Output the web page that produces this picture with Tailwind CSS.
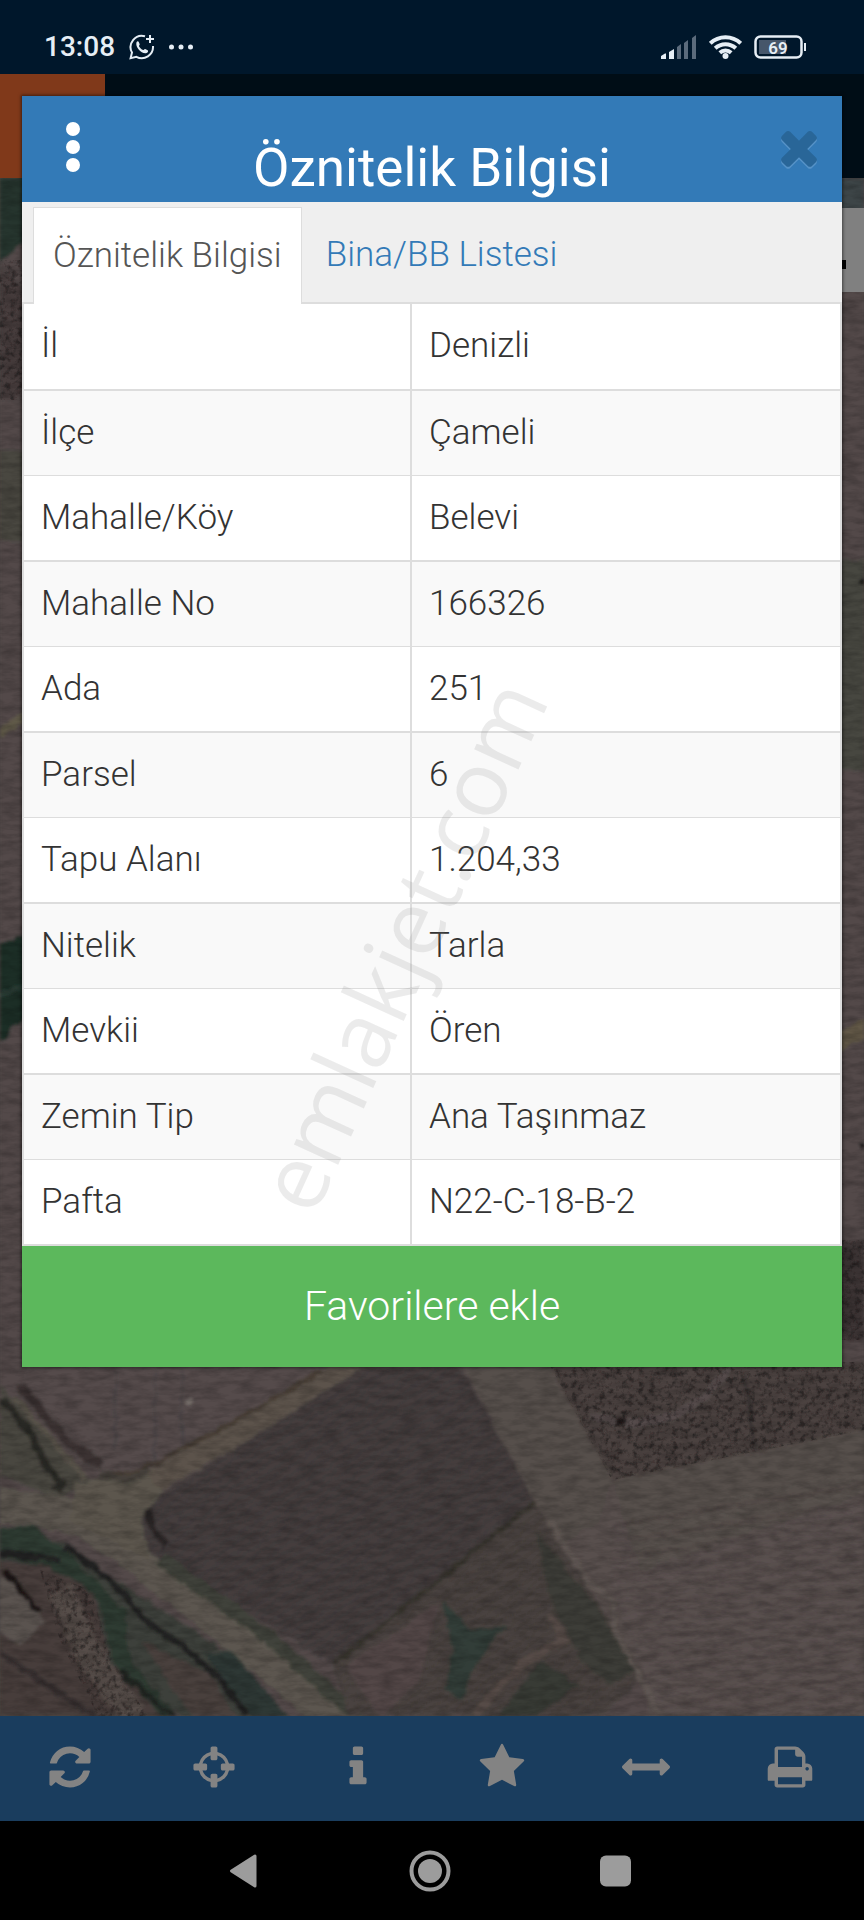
<!DOCTYPE html>
<html lang="tr">
<head>
  <meta charset="UTF-8">
  <meta name="viewport" content="width=device-width, initial-scale=1.0">
  <title>Öznitelik Bilgisi</title>
  <script src="https://cdn.jsdelivr.net/npm/@tailwindcss/browser@4"></script>
</head>
<body class="font-['Roboto','Noto_Sans',sans-serif] bg-black">
  <div class="relative flex min-h-screen flex-col overflow-hidden">

    <!-- status bar -->
    <div class="flex h-[74px] items-center justify-between bg-[#00172b] pt-5 pr-[58px] pl-11 text-[#e6eef5]">
      <div class="flex items-center gap-[14px]">
        <span class="text-[28px] leading-8 font-medium">13:08</span>
        <svg class="size-[26px]" viewBox="0 0 26 26" fill="none" stroke="currentColor" stroke-width="2">
          <path d="M16 2.2A11.3 11.3 0 0 0 3 18.5L1.6 24.2l5.8-1.4A11.3 11.3 0 0 0 24 12"/>
          <path d="M21 1v8M17 5h8"/>
          <path d="M7.5 8.2c.8-1.3 2-1 2.4 0l.8 2c.2.8-.9 1.5-.7 2 1 2 2.300 3 4.200 3.900.6.2 1.300-1.300 2-1l2.400 1.200c1 .6.4 2.200-1 2.700-4.600 1.400-11.700-5.500-10.100-10.800z" fill="currentColor" stroke="none"/>
        </svg>
        <svg class="h-2 w-6" viewBox="0 0 24 8" fill="currentColor"><circle cx="2.500" cy="4" r="2.500"/><circle cx="12" cy="4" r="2.500"/><circle cx="21.500" cy="4" r="2.500"/></svg>
      </div>
      <div class="flex items-center gap-3">
        <svg class="h-6 w-9" viewBox="0 0 36 24" fill="currentColor">
          <path d="M0 24v-3l4-2.500h1V24zM8 24v-7l5-3v10z"/>
          <path d="M16 24V12l4-3v15zM23 24V8l4-3v19zM31 24V3l4-3v24z" fill="#5b6b7c"/>
        </svg>
        <svg class="h-6 w-[33px]" viewBox="0 0 33 24" fill="none" stroke="currentColor" stroke-width="4">
          <path d="M1.300 8.300a22 22 0 0 1 30.400 0"/><path d="M6.200 13.300a15 15 0 0 1 20.600 0"/><path d="M10.800 17.800a8.500 8.500 0 0 1 11.400 0"/>
          <circle cx="16.500" cy="21" r="3" fill="currentColor" stroke="none"/>
        </svg>
        <svg class="h-6 w-[52px]" viewBox="0 0 52 24" fill="none">
          <rect x="1.500" y="1.500" width="46" height="21" rx="5" stroke="currentColor" stroke-width="2.500"/>
          <path d="M5 5h27v14H5z" fill="#46566a"/>
          <path d="M50 8h2v8h-2z" fill="currentColor"/>
          <text x="24" y="19" text-anchor="middle" font-size="17" font-weight="600" fill="currentColor">69</text>
        </svg>
      </div>
    </div>

    <!-- app header -->
    <div class="h-[104px] bg-[#000d16]">
      <div class="h-full w-[105px] bg-[#80391a]"></div>
    </div>

    <!-- map -->
    <div class="relative flex-1 overflow-hidden bg-[#4d4644]">
      <svg class="absolute inset-0 size-full" viewBox="0 178 864 1538" preserveAspectRatio="xMidYMid slice" fill="none">
        <defs>
          <filter id="soft" x="0" y="178" width="864" height="1538" filterUnits="userSpaceOnUse">
            <feTurbulence type="fractalNoise" baseFrequency="0.09" numOctaves="3" seed="4" result="n"/>
            <feDisplacementMap in="SourceGraphic" in2="n" scale="8" xChannelSelector="R" yChannelSelector="G"/>
            <feGaussianBlur stdDeviation="1.500"/>
          </filter>
          <filter id="grain" x="0" y="178" width="864" height="1538" filterUnits="userSpaceOnUse">
            <feTurbulence type="fractalNoise" baseFrequency="0.05 0.16" numOctaves="4" seed="9"/>
            <feColorMatrix values="0 0 0 0 0  0 0 0 0 0  0 0 0 0 0  1 0 0 0 -0.350"/>
          </filter>
          <filter id="scrub" x="0" y="178" width="864" height="1538" filterUnits="userSpaceOnUse">
            <feTurbulence type="fractalNoise" baseFrequency="0.18" numOctaves="3" seed="2"/>
            <feColorMatrix values="0 0 0 0 0.010  0 0 0 0 0.008  0 0 0 0 0.008  3 0 0 0 -1.400"/>
            <feComposite in2="SourceGraphic" operator="in"/>
          </filter>
          <pattern id="plow" width="12" height="7" patternUnits="userSpaceOnUse" patternTransform="rotate(-33)">
            <path d="M0 2h12" stroke="#332e30" stroke-width="1" opacity=".5"/>
          </pattern>
          <pattern id="furrow" width="40" height="17" patternUnits="userSpaceOnUse" patternTransform="rotate(-9)">
            <path d="M0 4h40" stroke="#443b3b" stroke-width="2" opacity=".6"/>
            <path d="M0 12h40" stroke="#5d5453" stroke-width="2" opacity=".5"/>
          </pattern>
        </defs>
        <g filter="url(#soft)">
          <path d="M-10 160h884v1570H-10z" fill="#524a49"/>
          <path d="M-10 170h50v60L-10 270z" fill="#26352f"/>
          <path d="M-10 260 40 300V400H-10z" fill="#463e3c"/>
          <path d="M-10 450h50v90h-50z" fill="#4a4740"/>
          <path d="M-10 740 40 705" stroke="#615a4a" stroke-width="8"/>
          <path d="M-10 945 40 930V1005L-10 1050z" fill="#1e2d28"/>
          <path d="M-10 1000 40 980" stroke="#2c3d36" stroke-width="6"/>
          <path d="M830 170h40v50h-40z" fill="#3c4446"/>
          <path d="M830 560h40v210h-40z" fill="#47463f"/>
          <path d="M830 1045 874 1025" stroke="#625847" stroke-width="18"/>
          <path d="M830 1240h40v100h-40z" fill="#3d3636"/>
          <circle cx="863" cy="581" r="4" fill="#151213"/><circle cx="863" cy="1145" r="4" fill="#151213"/>
          <!-- fields above the road -->
          <path d="M25 1367H345L180 1455 110 1468 25 1385z" fill="#554c4c"/>
          <path d="M0 1385 90 1480 60 1500 0 1475z" fill="#4a4640"/>
          <path d="M15 1398 85 1478" stroke="#59524a" stroke-width="5"/>
          <path d="M2 1398 30 1432 48 1470 62 1482 55 1492" stroke="#2c2a27" stroke-width="8"/>
          <path d="M20 1385 65 1440 102 1466" stroke="#3b3231" stroke-width="9"/>
          <path d="M115 1370v80M155 1370v90M182 1370v80" stroke="#4a4344" stroke-width="2"/>
          <circle cx="189" cy="1402" r="3" fill="#766e6a"/>
          <!-- roads -->
          <path d="M-10 1505C40 1508 85 1515 115 1540S220 1615 345 1730" stroke="#5c574f" stroke-width="34"/>
          <path d="M90 1508C140 1502 165 1470 225 1440L370 1355" stroke="#5b534b" stroke-width="24"/>
          <path d="M75 1482 145 1475 165 1495 142 1520 150 1560 70 1520z" fill="#5b574e"/>
          <path d="M100 1475Q140 1475 165 1458L220 1430 320 1372" stroke="#473c34" stroke-width="4"/>
          <path d="M100 1474 125 1480 150 1470" stroke="#45413a" stroke-width="7"/>
          <!-- creek -->
          <path d="M-5 1530 65 1542 130 1590 232 1655 290 1720H190L115 1680 90 1590-5 1562z" fill="#3d403b"/>
          <path d="M-5 1530 30 1525 60 1545 100 1585 125 1610 130 1660 180 1720H145L112 1660 98 1600 40 1565-5 1555z" fill="#2f3a33"/>
          <path d="M205 1655 232 1650 290 1720H255z" fill="#2d3834"/>
          <path d="M-5 1552 60 1560M65 1545 110 1580 145 1620 190 1652 222 1682 246 1714" stroke="#232423" stroke-width="7"/>
          <path d="M-5 1560 50 1566 95 1595 108 1660 165 1720H-5z" fill="#463c3b"/>
          <path d="M60 1590 95 1665 135 1716" stroke="#564d49" stroke-width="26"/>
          <path d="M120 1672 175 1718" stroke="#232524" stroke-width="6"/>
          <path d="M140 1640 210 1675 238 1720 195 1720z" fill="#4a403e"/>
          <path d="M-5 1580 12 1572 45 1622 20 1645-5 1630z" fill="#5a5250"/>
          <path d="M5 1570 38 1612" stroke="#1c1818" stroke-width="6"/>
          <path d="M-5 1650 100 1720" stroke="#352e2e" stroke-width="6"/>
          <!-- ploughed field -->
          <path d="M363 1368h98l76 134-204 163-183-112-10-34 20-24z" fill="#443d3e"/>
          <path d="M363 1368h98l76 134-204 163-183-112-10-34 20-24z" fill="url(#plow)"/>
          <path d="M148 1510 152 1528 166 1545" stroke="#2b2526" stroke-width="8"/>
          <path d="M160 1558 270 1638 362 1720" stroke="#41423a" stroke-width="14"/>
          <!-- grass in the middle -->
          <path d="M535 1502 333 1665 350 1716H600L645 1675 560 1540z" fill="#4a433f"/>
          <path d="M535 1502 333 1665 350 1716H600L645 1675 560 1540z" fill="url(#plow)"/>
          <path d="M345 1665 440 1600 420 1680 380 1720z" fill="#524746"/>
          <path d="M442 1600 470 1630 505 1625 475 1665 462 1700 444 1690 452 1650z" fill="#333d37"/>
          <path d="M540 1660 580 1685 530 1720H495z" fill="#383a35"/>
          <path d="M535 1530 600 1610 638 1670 610 1685 580 1660 550 1600z" fill="#3e3c37"/>
          <path d="M475 1715 520 1665 565 1640 550 1615" stroke="#574c47" stroke-width="8"/>
          <path d="M333 1665 535 1502" stroke="#39352f" stroke-width="5"/>
          <!-- fields on the right -->
          <path d="M461 1362H548L612 1478 874 1425V1726H650L645 1675 560 1545 535 1502z" fill="#584f4e"/>
          <path d="M461 1362H548L612 1478 600 1520 560 1545 535 1502z" fill="#57504b"/>
          <path d="M612 1478 874 1425V1490L640 1570z" fill="#56504b"/>
          <path d="M612 1520 874 1470V1726H665L612 1600z" fill="url(#furrow)"/>
          <path d="M548 1362H874V1428L612 1480z" fill="#4b4240"/>
          <path d="M590 1415Q680 1445 735 1360" stroke="#544c4b" stroke-width="8"/>
          <path d="M745 1375 755 1450" stroke="#383330" stroke-width="4"/>
          <circle cx="621" cy="1421" r="6" fill="#1d1617"/>
          <path d="M550 1520 590 1585 612 1598 615 1630 660 1716" stroke="#5f5652" stroke-width="5"/>
        </g>
        <g filter="url(#scrub)" opacity=".6">
          <path d="M548 1362H874V1428L612 1480zM40 1570 90 1590 115 1665 150 1720H100L60 1640zM0 260h24v140H0zM840 1240h24v100h-24z" fill="#000"/>
        </g>
        <path d="M0 178h864v1538H0z" filter="url(#grain)" opacity=".4"/>
      </svg>
      <div class="absolute top-[30px] right-0 flex h-[84px] w-10 items-center bg-[#808080]">
        <span class="mt-7 ml-3 h-[9px] w-[10px] bg-black"></span>
      </div>
    </div>

    <!-- bottom toolbar -->
    <nav class="grid h-[105px] grid-cols-6 items-center justify-items-center bg-[#1a3d5e] pb-1 text-[#838383]">
      <button type="button" class="pr-1" aria-label="Yenile"><svg class="size-12" viewBox="0 0 1792 1792" fill="currentColor"><path d="M1639 1056q0 5-1 7-64 268-268 434.500t-478 166.500q-146 0-282.500-55t-243.500-157l-129 129q-19 19-45 19t-45-19-19-45v-448q0-26 19-45t45-19h448q26 0 45 19t19 45-19 45l-137 137q71 66 161 102t187 36q134 0 250-65t186-179q11-17 53-117 8-23 30-23h192q13 0 22.500 9.500t9.500 22.500zm25-800v448q0 26-19 45t-45 19h-448q-26 0-45-19t-19-45 19-45l138-138q-148-137-349-137-134 0-250 65t-186 179q-11 17-53 117-8 23-30 23h-199q-13 0-22.500-9.500t-9.500-22.500v-7q65-268 270-434.500t480-166.500q146 0 284 55.500t245 156.500l130-129q19-19 45-19t45 19 19 45z"/></svg></button>
      <button type="button" class="pr-1" aria-label="Konum"><svg class="size-12" viewBox="0 0 1792 1792" fill="currentColor"><path d="M1325 1024h-109q-26 0-45-19t-19-45v-128q0-26 19-45t45-19h109q-32-108-112.500-188.500t-188.500-112.500v109q0 26-19 45t-45 19h-128q-26 0-45-19t-19-45v-109q-108 32-188.500 112.500t-112.500 188.500h109q26 0 45 19t19 45v128q0 26-19 45t-45 19h-109q32 108 112.500 188.500t188.500 112.500v-109q0-26 19-45t45-19h128q26 0 45 19t19 45v109q108-32 188.500-112.500t112.500-188.500zm339-192v128q0 26-19 45t-45 19h-143q-37 161-154.500 278.500t-278.500 154.500v143q0 26-19 45t-45 19h-128q-26 0-45-19t-19-45v-143q-161-37-278.500-154.500t-154.500-278.500h-143q-26 0-45-19t-19-45v-128q0-26 19-45t45-19h143q37-161 154.500-278.500t278.500-154.500v-143q0-26 19-45t45-19h128q26 0 45 19t19 45v143q161 37 278.500 154.500t154.500 278.500h143q26 0 45 19t19 45z"/></svg></button>
      <button type="button" class="pr-1" aria-label="Bilgi"><svg class="size-12" viewBox="0 0 1792 1792" fill="currentColor"><path d="M1216 1344v128q0 26-19 45t-45 19h-512q-26 0-45-19t-19-45v-128q0-26 19-45t45-19h64v-384h-64q-26 0-45-19t-19-45v-128q0-26 19-45t45-19h384q26 0 45 19t19 45v576h64q26 0 45 19t19 45zm-128-1152v192q0 26-19 45t-45 19h-256q-26 0-45-19t-19-45v-192q0-26 19-45t45-19h256q26 0 45 19t19 45z"/></svg></button>
      <button type="button" class="pr-1" aria-label="Favoriler"><svg class="size-12" viewBox="0 0 1792 1792" fill="currentColor"><path d="M1728 647q0 22-26 48l-363 354 86 500q1 7 1 20 0 21-10.500 35.500t-30.500 14.500q-19 0-40-12l-449-236-449 236q-22 12-40 12-21 0-31.500-14.500t-10.500-35.500q0-6 2-20l86-500-364-354q-25-27-25-48 0-37 56-46l502-73 225-455q19-41 49-41t49 41l225 455 502 73q56 9 56 46z"/></svg></button>
      <button type="button" class="pr-1" aria-label="Ölç"><svg class="size-12" viewBox="0 0 1792 1792" fill="currentColor"><path d="M1792 896q0 26-19 45l-256 256q-19 19-45 19t-45-19-19-45v-128h-1024v128q0 26-19 45t-45 19-45-19l-256-256q-19-19-19-45t19-45l256-256q19-19 45-19t45 19 19 45v128h1024v-128q0-26 19-45t45-19 45 19l256 256q19 19 19 45z"/></svg></button>
      <button type="button" class="pr-1" aria-label="Yazdır"><svg class="size-12" viewBox="0 0 1792 1792" fill="currentColor"><path d="M448 1536h896v-256h-896v256zm0-640h896v-384h-160q-40 0-68-28t-28-68v-160h-640v640zm1152 64q0-26-19-45t-45-19-45 19-19 45 19 45 45 19 45-19 19-45zm128 0v416q0 13-9.500 22.500t-22.500 9.500h-224v160q0 40-28 68t-68 28h-960q-40 0-68-28t-28-68v-160h-224q-13 0-22.500-9.500t-9.500-22.500v-416q0-79 56.500-135.500t135.500-56.500h64v-544q0-40 28-68t68-28h672q40 0 88 20t76 48l152 152q28 28 48 76t20 88v256h64q79 0 135.500 56.500t56.500 135.500z"/></svg></button>
    </nav>

    <!-- system navigation -->
    <nav class="flex h-[99px] items-center justify-center gap-[144px] bg-black pr-1 text-[#9c9c9c]">
      <button type="button" aria-label="Geri"><svg class="size-[42px]" viewBox="0 0 42 42" fill="currentColor" stroke="currentColor" stroke-width="3" stroke-linejoin="round"><path d="M8.500 21 32 6v30z"/></svg></button>
      <button type="button" aria-label="Ana ekran"><svg class="size-[42px]" viewBox="0 0 42 42" fill="none"><circle cx="21" cy="21" r="18.500" stroke="currentColor" stroke-width="4"/><circle cx="21" cy="21" r="12" fill="currentColor"/></svg></button>
      <button type="button" aria-label="Son uygulamalar"><svg class="size-[42px]" viewBox="0 0 42 42" fill="currentColor"><rect x="5" y="5.500" width="31" height="31" rx="6"/></svg></button>
    </nav>

    <!-- attribute dialog -->
    <div role="dialog" aria-labelledby="dialog-title" class="absolute inset-x-[22px] top-24 bg-white shadow-[0_0_3px_1px_rgba(0,0,0,0.5)]">
      <header class="relative flex h-[106px] items-end justify-center bg-[#337ab7] text-white">
        <button type="button" aria-label="Menü" class="absolute top-[26px] left-11">
          <svg class="h-[50px] w-[14px]" viewBox="0 0 14 50" fill="currentColor"><circle cx="7" cy="7" r="7"/><circle cx="7" cy="25" r="7"/><circle cx="7" cy="43" r="7"/></svg>
        </button>
        <h1 id="dialog-title" class="text-[53px] leading-[68px]">Öznitelik Bilgisi</h1>
        <button type="button" aria-label="Kapat" class="absolute top-6 right-4">
          <svg class="size-[54px] text-[#296698] drop-shadow-[0_2px_0_rgba(120,170,215,0.5)]" viewBox="0 0 1792 1792" fill="currentColor"><path d="M1490 1322q0 40-28 68l-136 136q-28 28-68 28t-68-28l-294-294-294 294q-28 28-68 28t-68-28l-136-136q-28-28-28-68t28-68l294-294-294-294q-28-28-28-68t28-68l136-136q28-28 68-28t68 28l294 294 294-294q28-28 68-28t68 28l136 136q28 28 28 68t-28 68l-294 294 294 294q28 28 28 68z"/></svg>
        </button>
      </header>

      <div role="tablist" class="flex h-[102px] items-end border-b-2 border-[#dddddd] bg-[#efefef] pl-[11px] text-[35px] font-light">
        <button type="button" role="tab" aria-selected="true" class="-mb-0.5 h-[97px] border border-b-0 border-[#dddddd] bg-white px-[19px] text-[#555555]">Öznitelik Bilgisi</button>
        <button type="button" role="tab" aria-selected="false" class="-mb-0.5 h-[97px] px-6 text-[#337ab7]">Bina/BB Listesi</button>
      </div>

      <table class="w-full border-x-2 border-[#dddddd] text-left text-[35px] font-light text-[#333333]">
        <colgroup><col class="w-[388px]"><col></colgroup>
        <tbody id="attributes"></tbody>
      </table>

      <button type="button" class="block h-[121px] w-full bg-[#5cb85c] text-[41px] font-light text-white">Favorilere ekle</button>
    </div>

    <!-- watermark -->
    <svg class="pointer-events-none absolute inset-0 size-full" viewBox="0 0 864 1920">
      <text transform="translate(432 959) rotate(-65.500)" text-anchor="middle" class="font-['Open_Sans',sans-serif] text-[91px]" fill="#808080" opacity=".15">emlakjet.com</text>
    </svg>
  </div>

  <script>
    const attributes = [
      ['İl', 'Denizli'],
      ['İlçe', 'Çameli'],
      ['Mahalle/Köy', 'Belevi'],
      ['Mahalle No', '166326'],
      ['Ada', '251'],
      ['Parsel', '6'],
      ['Tapu Alanı', '1.204,33'],
      ['Nitelik', 'Tarla'],
      ['Mevkii', 'Ören'],
      ['Zemin Tip', 'Ana Taşınmaz'],
      ['Pafta', 'N22-C-18-B-2']
    ];

    document.getElementById('attributes').innerHTML = attributes.map(([name, value]) => `
      <tr class="h-[86px] border-b-2 border-[#dddddd] even:h-[85px] even:border-b even:bg-[#f9f9f9]">
        <th scope="row" class="border-r-2 border-[#dddddd] pl-[17px] font-light">${name}</th>
        <td class="pl-[17px]">${value}</td>
      </tr>`).join('');
  </script>
</body>
</html>
